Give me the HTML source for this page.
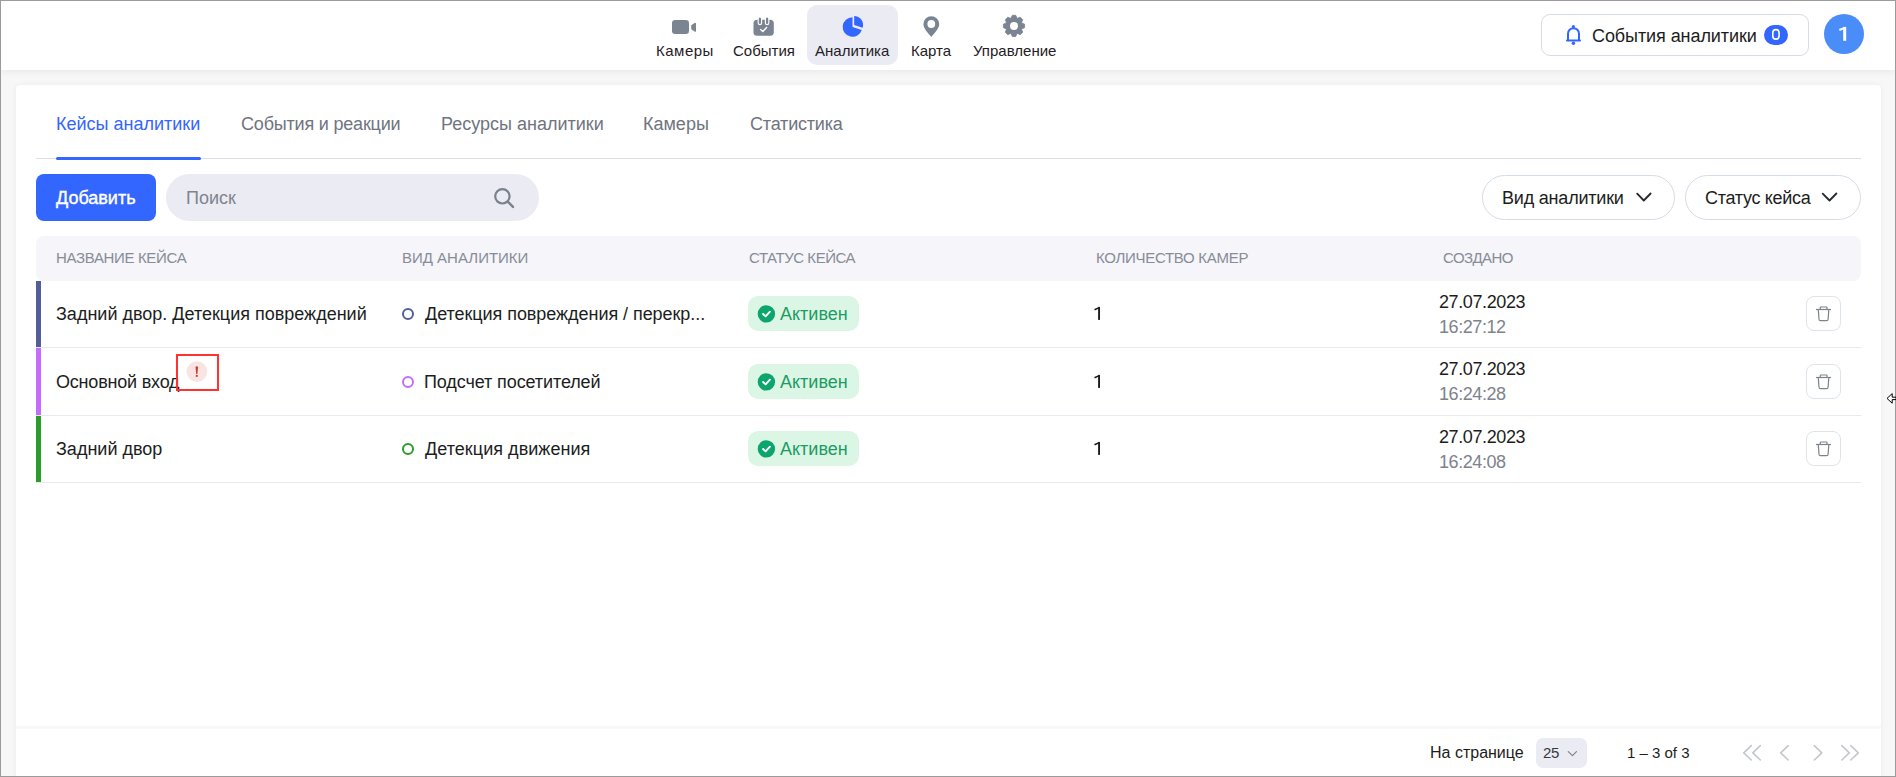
<!DOCTYPE html>
<html><head><meta charset="utf-8">
<style>
*{box-sizing:border-box;margin:0;padding:0}
html,body{width:1896px;height:777px;overflow:hidden;background:#f7f7f8;font-family:"Liberation Sans",sans-serif;color:#1c1d21}
.a{position:absolute;white-space:nowrap}
#frame{position:absolute;left:0;top:0;width:1896px;height:777px;border:1px solid #9b9b9b;z-index:100;pointer-events:none}
#hdr{position:absolute;left:0;top:0;width:1896px;height:70px;background:#fff;box-shadow:0 1px 8px rgba(0,0,0,.075)}
.nt{font-size:15px;line-height:15px;color:#1f2024}
#card{position:absolute;left:16px;top:85px;width:1865px;height:700px;background:#fff;border-radius:4px;box-shadow:0 0 5px rgba(0,0,0,.05)}
.tab{font-size:18px;line-height:18px;color:#6f7480}
.th{font-size:15px;line-height:15px;color:#878c96}
.td{font-size:18px;line-height:18px;color:#1c1d21}
.row{position:absolute;left:36px;width:1825px;height:67px;border-bottom:1px solid #e8e9f0}
.bar{position:absolute;left:36px;width:5px;height:66px}
.ring{position:absolute;width:12px;height:12px;border-radius:50%;border:2px solid}
.badge{position:absolute;left:748px;width:111px;height:35px;border-radius:10px;background:#dcf6e6}
.trash{position:absolute;left:1806px;width:35px;height:35px;border:1px solid #dfe3ea;border-radius:8px;background:#fff}
</style></head><body>
<div id="hdr"></div>
<!-- nav highlight -->
<div class="a" style="left:807px;top:5px;width:91px;height:60px;border-radius:10px;background:#ebebf4"></div>
<div class="a nt" style="left:656px;top:43px;letter-spacing:0.5px">Камеры</div>
<div class="a nt" style="left:733px;top:43px">События</div>
<div class="a nt" style="left:815px;top:43px">Аналитика</div>
<div class="a nt" style="left:911px;top:43px">Карта</div>
<div class="a nt" style="left:973px;top:43px">Управление</div>


<!-- header icons -->
<svg class="a" style="left:0;top:0" width="1896" height="70" viewBox="0 0 1896 70">
 <g fill="#7b8591">
  <rect x="672" y="20" width="17" height="14" rx="3.2"/>
  <path d="M691.2 25.2 L694.6 22.9 Q696 22.2 696 23.6 V30.9 Q696 32.3 694.6 31.6 L691.2 29.3 Z"/>
  <rect x="753.5" y="19.7" width="20.3" height="16.1" rx="3.6"/>
  <path d="M923.4 24.2 A7.9 7.9 0 0 1 939.2 24.2 C939.2 28.2 935 32.5 931.3 36.9 C927.6 32.5 923.4 28.2 923.4 24.2 Z"/>
 </g>
 <g fill="#7b8591" stroke="#fff" stroke-width="1.1">
  <rect x="758.2" y="17" width="3.4" height="7.6" rx="1.7"/>
  <rect x="765.4" y="17" width="3.4" height="7.6" rx="1.7"/>
 </g>
 <path d="M760.6 29.5 L762.8 31.5 L766.6 27.4" fill="none" stroke="#fff" stroke-width="1.4" stroke-linecap="round" stroke-linejoin="round"/>
 <circle cx="931.3" cy="24" r="3.9" fill="#fff"/>
 <path d="M1011.10 18.00 L1012.25 15.30 L1015.75 15.30 L1016.90 18.00 L1017.54 18.26 L1020.26 17.17 L1022.73 19.64 L1021.64 22.36 L1021.90 23.00 L1024.60 24.15 L1024.60 27.65 L1021.90 28.80 L1021.64 29.44 L1022.73 32.16 L1020.26 34.63 L1017.54 33.54 L1016.90 33.80 L1015.75 36.50 L1012.25 36.50 L1011.10 33.80 L1010.46 33.54 L1007.74 34.63 L1005.27 32.16 L1006.36 29.44 L1006.10 28.80 L1003.40 27.65 L1003.40 24.15 L1006.10 23.00 L1006.36 22.36 L1005.27 19.64 L1007.74 17.17 L1010.46 18.26 Z" fill="#7b8591" stroke="#7b8591" stroke-width="0.8" stroke-linejoin="round"/>
 <circle cx="1014" cy="25.9" r="8" fill="#7b8591"/>
 <circle cx="1014" cy="25.9" r="4" fill="#fff"/>
 <g fill="#3366ff">
  <path d="M852.5 27 V17.2 A9.8 9.8 0 1 0 861.82 30.03 Z"/>
  <path d="M854.2 25 V16.1 A8.9 8.9 0 0 1 862.66 27.75 Z"/>
 </g>
</svg>
<!-- events button -->
<div class="a" style="left:1541px;top:14px;width:268px;height:42px;border:1px solid #d6dce6;border-radius:9px;background:#fff"></div>
<svg class="a" style="left:1560px;top:20px" width="30" height="30" viewBox="1560 20 30 30">
 <g stroke="#2f66ff" stroke-width="2" fill="none">
  <path d="M1568 40.5 V33.7 A5.5 5.5 0 0 1 1579 33.7 V40.5"/>
  <path d="M1567 40.5 H1580" stroke-linecap="round"/>
 </g>
 <g fill="#2f66ff"><circle cx="1573.4" cy="26.6" r="1.6"/><circle cx="1573.4" cy="43.3" r="1.7"/></g>
</svg>
<div class="a" style="left:1592px;top:26.5px;letter-spacing:-0.08px;font-size:18px;line-height:18px;color:#1c1d21">События аналитики</div>
<div class="a" style="left:1764px;top:25px;width:24px;height:20px;border-radius:10px;background:#3366ff"></div>
<svg class="a" style="left:1764px;top:24px" width="24" height="22" viewBox="1764 24 24 22"><rect x="1772.8" y="29.6" width="6.3" height="9.5" rx="3.1" fill="none" stroke="#fff" stroke-width="1.6"/></svg>
<div class="a" style="left:1824px;top:14px;width:40px;height:40px;border-radius:50%;background:#4a8cf8"></div>
<svg class="a" style="left:1832px;top:22px" width="24" height="24" viewBox="1832 22 24 24"><path d="M1839.4 30 L1844.7 27.9" stroke="#fff" stroke-width="2" stroke-linecap="butt"/><rect x="1843.2" y="26.9" width="3" height="13.9" fill="#fff"/></svg>

<div id="card"></div>
<!-- tabs -->
<div class="a tab" style="left:56px;top:115px;color:#3366ff">Кейсы аналитики</div>
<div class="a tab" style="left:241px;top:115px;letter-spacing:-0.19px">События и реакции</div>
<div class="a tab" style="left:441px;top:115px">Ресурсы аналитики</div>
<div class="a tab" style="left:643px;top:115px">Камеры</div>
<div class="a tab" style="left:750px;top:115px;letter-spacing:-0.19px">Статистика</div>
<div class="a" style="left:36px;top:158px;width:1825px;height:1px;background:#d9dee7"></div>
<div class="a" style="left:56px;top:157px;width:145px;height:3px;border-radius:2px;background:#3366ff"></div>

<!-- toolbar -->
<div class="a" style="left:36px;top:174px;width:120px;height:47px;border-radius:8px;background:#3366ff"></div>
<div class="a" style="left:56px;top:189px;font-size:18px;line-height:18px;color:#fff;-webkit-text-stroke:0.4px #fff">Добавить</div>
<div class="a" style="left:166px;top:174px;width:373px;height:47px;border-radius:24px;background:#ebebf3"></div>
<div class="a" style="left:186px;top:189px;font-size:18px;line-height:18px;color:#7f858e">Поиск</div>
<div class="a" style="left:1482px;top:175px;width:193px;height:45px;border:1px solid #d6dce6;border-radius:23px;background:#fff"></div>
<div class="a" style="left:1502px;top:189px;font-size:18px;line-height:18px;letter-spacing:-0.2px">Вид аналитики</div>
<div class="a" style="left:1685px;top:175px;width:176px;height:45px;border:1px solid #d6dce6;border-radius:23px;background:#fff"></div>
<div class="a" style="left:1705px;top:189px;font-size:18px;line-height:18px;letter-spacing:-0.3px">Статус кейса</div>


<svg class="a" style="left:0;top:160px" width="1896" height="70" viewBox="0 160 1896 70">
 <circle cx="502.4" cy="196.3" r="7.2" fill="none" stroke="#78818c" stroke-width="2.2"/>
 <path d="M508.3 202.2 L513 206.9" stroke="#78818c" stroke-width="2.4" stroke-linecap="round"/>
 <path d="M1637.2 193.7 L1643.8 200.5 L1650.6 193.5" fill="none" stroke="#262932" stroke-width="1.85" stroke-linecap="round" stroke-linejoin="round"/>
 <path d="M1822.7 193.7 L1829.5 200.5 L1836.4 193.5" fill="none" stroke="#262932" stroke-width="1.85" stroke-linecap="round" stroke-linejoin="round"/>
</svg>
<!-- table header -->
<div class="a" style="left:36px;top:236px;width:1825px;height:45px;border-radius:8px;background:#f5f5fa"></div>
<div class="a th" style="left:56px;top:250px;letter-spacing:-0.34px">НАЗВАНИЕ КЕЙСА</div>
<div class="a th" style="left:402px;top:250px">ВИД АНАЛИТИКИ</div>
<div class="a th" style="left:749px;top:250px;letter-spacing:-0.45px">СТАТУС КЕЙСА</div>
<div class="a th" style="left:1096px;top:250px;letter-spacing:-0.29px">КОЛИЧЕСТВО КАМЕР</div>
<div class="a th" style="left:1443px;top:250px;letter-spacing:-0.58px">СОЗДАНО</div>

<!-- rows -->
<div class="a" style="left:36px;top:347px;width:1825px;height:1px;background:#e8e9f0"></div>
<div class="bar" style="top:281px;height:66px;background:#545e96"></div>
<div class="a td" style="left:56px;top:305px">Задний двор. Детекция повреждений</div>
<div class="ring" style="left:402px;top:308px;border-color:#545e96"></div>
<div class="a td" style="left:425px;top:305px;letter-spacing:-0.05px">Детекция повреждения / перекр...</div>
<div class="badge" style="top:296px"></div>
<svg class="a" style="left:752px;top:300px" width="30" height="28" viewBox="752 300 30 28"><circle cx="766.4" cy="313.9" r="8.7" fill="#0ca56d"/><path d="M763.1 314 L765.6 316.4 L769.9 311.7" fill="none" stroke="#fff" stroke-width="1.9" stroke-linecap="round" stroke-linejoin="round"/></svg>
<div class="a td" style="left:780px;top:305px;color:#1b9c63">Активен</div>
<svg class="a" style="left:1088px;top:302px" width="20" height="24" viewBox="1088 302 20 24"><path d="M1094.5 309.8 L1099.2 307.6" stroke="#1c1d21" stroke-width="1.6"/><rect x="1098.1" y="306.9" width="1.9" height="13" fill="#1c1d21"/></svg>
<div class="a td" style="left:1439px;top:293px;letter-spacing:-0.39px">27.07.2023</div>
<div class="a td" style="left:1439px;top:318px;color:#7d838c;letter-spacing:-0.43px">16:27:12</div>
<div class="trash" style="top:296px"></div>
<svg class="a" style="left:1806px;top:296px" width="35" height="35" viewBox="1806 296 35 35"><g fill="none" stroke="#7d838b" stroke-width="1.2" stroke-linejoin="round"><path d="M1816 309.5 H1831"/><path d="M1820.3 309.3 V307.6 Q1820.3 307 1820.9 307 H1826.4 Q1827 307 1827 307.6 V309.3"/><path d="M1818.3 309.8 L1819 319.2 Q1819.1 320.6 1820.5 320.6 H1826.6 Q1828 320.6 1828.1 319.2 L1828.8 309.8"/></g></svg>
<div class="a" style="left:36px;top:415px;width:1825px;height:1px;background:#e8e9f0"></div>
<div class="bar" style="top:348px;height:67px;background:#c56cff"></div>
<div class="a td" style="left:56px;top:373px;letter-spacing:-0.2px">Основной вход</div>
<div class="ring" style="left:402px;top:376px;border-color:#c56cff"></div>
<div class="a td" style="left:424px;top:373px;letter-spacing:-0.1px">Подсчет посетителей</div>
<div class="badge" style="top:364px"></div>
<svg class="a" style="left:752px;top:368px" width="30" height="28" viewBox="752 300 30 28"><circle cx="766.4" cy="313.9" r="8.7" fill="#0ca56d"/><path d="M763.1 314 L765.6 316.4 L769.9 311.7" fill="none" stroke="#fff" stroke-width="1.9" stroke-linecap="round" stroke-linejoin="round"/></svg>
<div class="a td" style="left:780px;top:373px;color:#1b9c63">Активен</div>
<svg class="a" style="left:1088px;top:370px" width="20" height="24" viewBox="1088 302 20 24"><path d="M1094.5 309.8 L1099.2 307.6" stroke="#1c1d21" stroke-width="1.6"/><rect x="1098.1" y="306.9" width="1.9" height="13" fill="#1c1d21"/></svg>
<div class="a td" style="left:1439px;top:360px;letter-spacing:-0.39px">27.07.2023</div>
<div class="a td" style="left:1439px;top:385px;color:#7d838c;letter-spacing:-0.43px">16:24:28</div>
<div class="trash" style="top:364px"></div>
<svg class="a" style="left:1806px;top:364px" width="35" height="35" viewBox="1806 296 35 35"><g fill="none" stroke="#7d838b" stroke-width="1.2" stroke-linejoin="round"><path d="M1816 309.5 H1831"/><path d="M1820.3 309.3 V307.6 Q1820.3 307 1820.9 307 H1826.4 Q1827 307 1827 307.6 V309.3"/><path d="M1818.3 309.8 L1819 319.2 Q1819.1 320.6 1820.5 320.6 H1826.6 Q1828 320.6 1828.1 319.2 L1828.8 309.8"/></g></svg>
<div class="a" style="left:36px;top:482px;width:1825px;height:1px;background:#e8e9f0"></div>
<div class="bar" style="top:416px;height:66px;background:#2c9c2c"></div>
<div class="a td" style="left:56px;top:440px">Задний двор</div>
<div class="ring" style="left:402px;top:443px;border-color:#2c9c2c"></div>
<div class="a td" style="left:425px;top:440px;letter-spacing:0.05px">Детекция движения</div>
<div class="badge" style="top:431px"></div>
<svg class="a" style="left:752px;top:435px" width="30" height="28" viewBox="752 300 30 28"><circle cx="766.4" cy="313.9" r="8.7" fill="#0ca56d"/><path d="M763.1 314 L765.6 316.4 L769.9 311.7" fill="none" stroke="#fff" stroke-width="1.9" stroke-linecap="round" stroke-linejoin="round"/></svg>
<div class="a td" style="left:780px;top:440px;color:#1b9c63">Активен</div>
<svg class="a" style="left:1088px;top:437px" width="20" height="24" viewBox="1088 302 20 24"><path d="M1094.5 309.8 L1099.2 307.6" stroke="#1c1d21" stroke-width="1.6"/><rect x="1098.1" y="306.9" width="1.9" height="13" fill="#1c1d21"/></svg>
<div class="a td" style="left:1439px;top:428px;letter-spacing:-0.39px">27.07.2023</div>
<div class="a td" style="left:1439px;top:453px;color:#7d838c;letter-spacing:-0.43px">16:24:08</div>
<div class="trash" style="top:431px"></div>
<svg class="a" style="left:1806px;top:431px" width="35" height="35" viewBox="1806 296 35 35"><g fill="none" stroke="#7d838b" stroke-width="1.2" stroke-linejoin="round"><path d="M1816 309.5 H1831"/><path d="M1820.3 309.3 V307.6 Q1820.3 307 1820.9 307 H1826.4 Q1827 307 1827 307.6 V309.3"/><path d="M1818.3 309.8 L1819 319.2 Q1819.1 320.6 1820.5 320.6 H1826.6 Q1828 320.6 1828.1 319.2 L1828.8 309.8"/></g></svg>
<!-- error marker -->
<div class="a" style="left:176px;top:354px;width:43px;height:37px;border:2px solid #ff3131"></div>
<svg class="a" style="left:180px;top:358px" width="35" height="30" viewBox="180 358 35 30"><circle cx="196.9" cy="371.6" r="10.4" fill="#f9e4e4"/><path d="M195.55 367.6 A1.25 1.25 0 0 1 198.05 367.6 L197.45 373.4 Q197.3 373.9 196.8 373.9 Q196.3 373.9 196.15 373.4 Z" fill="#c8402b"/><circle cx="196.8" cy="375.9" r="1.1" fill="#c8402b"/></svg>


<!-- footer -->
<div class="a" style="left:16px;top:724px;width:1865px;height:5px;background:linear-gradient(#fff,#f8f8f9 60%,#f6f6f7 80%,#fcfcfc)"></div>
<div class="a" style="left:1430px;top:745px;font-size:16px;line-height:16px">На странице</div>
<div class="a" style="left:1536px;top:738px;width:51px;height:30px;border-radius:7px;background:#ebebf3"></div>
<div class="a" style="left:1543px;top:744.5px;font-size:15px;line-height:15px;color:#36383d;letter-spacing:-0.3px">25</div>
<div class="a" style="left:1627px;top:744.5px;font-size:15px;line-height:15px">1 – 3 of 3</div>


<svg class="a" style="left:1560px;top:735px" width="310" height="35" viewBox="1560 735 310 35">
 <path d="M1568.3 751.6 L1572.4 755.6 L1576.5 751.6" fill="none" stroke="#7d838c" stroke-width="1.2" stroke-linecap="round" stroke-linejoin="round"/>
 <g fill="none" stroke="#c3c7cd" stroke-width="1.6" stroke-linecap="round" stroke-linejoin="round">
  <path d="M1751.3 745.6 L1743.8 752.8 L1751.3 760"/>
  <path d="M1760.3 745.6 L1752.8 752.8 L1760.3 760"/>
  <path d="M1788.2 745.6 L1780.7 752.8 L1788.2 760"/>
  <path d="M1814.3 745.6 L1821.8 752.8 L1814.3 760"/>
  <path d="M1841.8 745.6 L1849.3 752.8 L1841.8 760"/>
  <path d="M1850.8 745.6 L1858.3 752.8 L1850.8 760"/>
 </g>
</svg>
<!-- cursor -->
<svg class="a" style="left:1880px;top:388px;z-index:101" width="16" height="22" viewBox="1880 388 16 22">
 <path d="M1887 398.4 L1892.2 393.6 L1892.2 397.2 L1896 397.2 L1896 399.6 L1892.2 399.6 L1892.2 403.2 Z" fill="#fff" stroke="#000" stroke-width="1" stroke-linejoin="miter"/>
</svg>
<div id="frame"></div>
</body></html>
